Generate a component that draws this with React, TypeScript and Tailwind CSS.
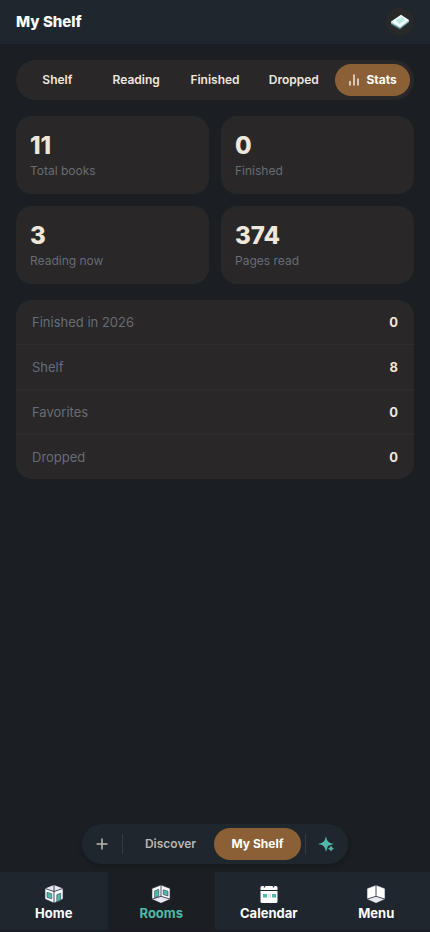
import type { ReactNode } from "react";

const tabs = ["Shelf", "Reading", "Finished", "Dropped", "Stats"];

const cards = [
  { value: 11, label: "Total books" },
  { value: 0, label: "Finished" },
  { value: 3, label: "Reading now" },
  { value: 374, label: "Pages read" },
];

const rows = [
  { label: "Finished in 2026", value: 0 },
  { label: "Shelf", value: 8 },
  { label: "Favorites", value: 0 },
  { label: "Dropped", value: 0 },
];

function BookIcon() {
  return (
    <svg viewBox="0 0 20 16" className="h-4 w-5" aria-hidden="true">
      <path d="M1 8v2.500l9 5.300 9-7.300V6z" fill="#466a75" />
      <path d="M1 7.500v1.800l9 5 9-6.800V6z" fill="#a9ced3" />
      <path d="M1 7.500 11 .8l8 5.200-9 7.200z" fill="#f4ffff" />
      <path d="m6 6.800 5.200-3.600L15 5.800l-5.200 4z" fill="#9fdfd9" />
      <path d="m7.300 7.700 5.200-3.600M8.600 8.700l5.200-3.700M7.800 5.600l3.700 2.600M9.600 4.300l3.700 2.500" stroke="#e4fbf9" strokeWidth=".5" />
    </svg>
  );
}

function BarsIcon() {
  return (
    <svg viewBox="0 0 12 12" className="h-3 w-3" fill="none" stroke="currentColor" strokeWidth="1.3" strokeLinecap="round" aria-hidden="true">
      <path d="M2 7.500V11M6 1v10M10 5v6" />
    </svg>
  );
}

function PlusIcon() {
  return (
    <svg viewBox="0 0 12 12" className="h-3 w-3" fill="none" stroke="currentColor" strokeWidth="1.6" aria-hidden="true">
      <path d="M6 .5v11M.5 6h11" />
    </svg>
  );
}

function SparkleIcon() {
  return (
    <svg viewBox="0 0 18 18" className="h-4.5 w-4.5" fill="currentColor" aria-hidden="true">
      <path d="M9 1c.9 5.200 2 6.800 8 8-2 .4-3.500.8-4.600 1.500-1.200-.3-2.300.8-1.900 2L9 17C7.900 11.300 6.600 10 1 9c5.600-1.200 7-2.600 8-8z" />
      <circle cx="14" cy="13.600" r="1.700" />
      <path d="M14 11c.4 1.800.8 2.200 2.600 2.600-1.800.4-2.200.8-2.600 2.600-.4-1.800-.8-2.200-2.600-2.600 1.800-.4 2.200-.8 2.600-2.600z" stroke="currentColor" strokeWidth=".6" />
    </svg>
  );
}

function HomeIcon() {
  return (
    <svg viewBox="0 0 20 20" className="h-5 w-5" strokeLinejoin="round" aria-hidden="true">
      <path d="M10 1 1 4.500V15l9 4 9-4V4.500z" fill="#fff" stroke="#303650" strokeWidth=".6" />
      <path d="M10 1.300 1.500 4.600 10 7.500l8.500-2.900z" fill="#e8e8ee" />
      <path d="M10 1v6.500M1.300 4.600 10 7.500l8.700-2.900M10 7.500V19" fill="none" stroke="#303650" strokeWidth=".9" />
      <path d="m3 8.300 4.800 1.500v5L3 13.400z" fill="#4ebaa7" stroke="#303650" strokeWidth=".6" />
      <path d="M12.800 18v-7.200l3.900-1.500v7z" fill="#4ebaa7" stroke="#303650" strokeWidth=".6" />
    </svg>
  );
}

function RoomsIcon() {
  return (
    <svg viewBox="0 0 20 20" className="h-5 w-5" strokeLinejoin="round" aria-hidden="true">
      <path d="M10 1 1 4.500V15l9 4 9-4V4.500z" fill="#fff" stroke="#303650" strokeWidth=".6" />
      <path d="m10 12.300-8.500 2.800 8.500 3.600 8.500-3.600z" fill="#e8e8ee" />
      <path d="M10 1v11.300M1.300 15l8.700-2.700 8.700 2.700" fill="none" stroke="#303650" strokeWidth=".9" />
      <path d="M3.600 14V7l4.200-1.700v7.200z" fill="#4ebaa7" stroke="#303650" strokeWidth=".6" />
      <path d="M12.200 5.700 17 7.200v4.800l-4.800-1.500z" fill="#4ebaa7" stroke="#303650" strokeWidth=".6" />
    </svg>
  );
}

function CalendarIcon() {
  return (
    <svg viewBox="0 0 20 20" className="h-5 w-5" aria-hidden="true">
      <path d="M3 2h14a1.500 1.500 0 0 1 1.500 1.500V6h-17V3.500A1.500 1.500 0 0 1 3 2z" fill="#fff" />
      <path d="M1.500 7h17v10.500A1.500 1.500 0 0 1 17 19H3a1.500 1.500 0 0 1-1.500-1.500z" fill="#fff" />
      <path d="M5.500 1.500v2M14.500 1.500v2" stroke="#303650" strokeWidth="1.400" />
      <path d="M4 10h4v3.500H4zM13 10h4v3.500h-4z" fill="#4ebaa7" />
      <path d="M9 10h3v3.500H9z" fill="#e4e4ec" />
    </svg>
  );
}

function MenuIcon() {
  return (
    <svg viewBox="0 0 20 20" className="h-5 w-5" strokeLinejoin="round" aria-hidden="true">
      <path d="M10 1 1 4.500V15l9 4 9-4V4.500z" fill="#fff" stroke="#303650" strokeWidth=".6" />
      <path d="m10 12.300-8.500 2.800 8.500 3.600 8.500-3.600z" fill="#e8e8ee" />
      <path d="M10 1v11.300M1.300 15l8.700-2.700 8.700 2.700" fill="none" stroke="#303650" strokeWidth=".9" />
    </svg>
  );
}

const navItems: { label: string; icon: ReactNode; active?: boolean }[] = [
  { label: "Home", icon: <HomeIcon /> },
  { label: "Rooms", icon: <RoomsIcon />, active: true },
  { label: "Calendar", icon: <CalendarIcon /> },
  { label: "Menu", icon: <MenuIcon /> },
];

export default function App() {
  return (
    <div className="flex min-h-screen flex-col bg-[#1b1f23] font-['Inter',sans-serif] text-[#f0e7dc]">
      <header className="flex h-11 items-center justify-between bg-[#1f262d] px-4">
        <h1 className="text-[15px] leading-5 font-extrabold text-white">My Shelf</h1>
        <button aria-label="Open book" className="flex size-7 items-center justify-center rounded-full bg-[#292929]">
          <BookIcon />
        </button>
      </header>

      <main className="flex flex-1 flex-col gap-4 p-4">
        <div role="tablist" className="grid grid-cols-5 gap-1 rounded-full bg-[#292727] p-1">
          {tabs.map((tab) => {
            const active = tab === "Stats";
            return (
              <button
                key={tab}
                role="tab"
                aria-selected={active}
                className={
                  active
                    ? "flex h-8 items-center justify-center gap-1.5 rounded-full bg-[#8c6037] pb-px text-xs font-bold text-white"
                    : "flex h-8 items-center justify-center rounded-full pb-px text-xs font-semibold"
                }
              >
                {active && <BarsIcon />}
                {tab}
              </button>
            );
          })}
        </div>

        <section className="grid grid-cols-2 gap-3">
          {cards.map((card) => (
            <div key={card.label} className="rounded-2xl bg-[#292727] p-3.5">
              <p className="text-2xl leading-8 font-extrabold">{card.value}</p>
              <p className="text-xs leading-[18px] text-[#686c75]">{card.label}</p>
            </div>
          ))}
        </section>

        <dl className="divide-y divide-[#2f2e2f] rounded-2xl bg-[#292727]">
          {rows.map((row) => (
            <div key={row.label} className="flex items-center justify-between px-4 py-3">
              <dt className="text-[13px] leading-5 text-[#686c75]">{row.label}</dt>
              <dd className="text-[13px] leading-5 font-bold">{row.value}</dd>
            </div>
          ))}
        </dl>
      </main>

      <div className="sticky bottom-0">
        <div className="mb-2 flex justify-center">
          <div className="flex items-center rounded-full bg-[#1f262d] py-1 pr-1.5 pl-1 shadow-md shadow-black/15">
            <button aria-label="Add book" className="flex size-8 items-center justify-center rounded-full text-[#b9b5b0]">
              <PlusIcon />
            </button>
            <span className="mx-1 h-5 w-px bg-[#343a40]" />
            <button className="h-8 w-[87px] rounded-full pb-px text-xs font-semibold text-[#b9b5b0]">Discover</button>
            <button className="h-8 w-[87px] rounded-full bg-[#8c6037] pb-px text-xs font-bold text-white">My Shelf</button>
            <span className="mx-1 h-5 w-px bg-[#343a40]" />
            <button aria-label="Suggestions" className="flex size-8 items-center justify-center rounded-full text-[#4ebaa7]">
              <SparkleIcon />
            </button>
          </div>
        </div>
        <nav className="grid grid-cols-4 border-b-2 border-[#1b1b25] bg-[#1f262d]">
          {navItems.map((item) => (
            <a
              key={item.label}
              href="#"
              aria-current={item.active ? "page" : undefined}
              className={
                item.active
                  ? "flex h-[58px] flex-col items-center bg-[#1b1f23] pt-3 text-[13px] leading-[18px] font-bold text-[#4ebaa7]"
                  : "flex h-[58px] flex-col items-center pt-3 text-[13px] leading-[18px] font-bold text-white"
              }
            >
              {item.icon}
              {item.label}
            </a>
          ))}
        </nav>
      </div>
    </div>
  );
}
